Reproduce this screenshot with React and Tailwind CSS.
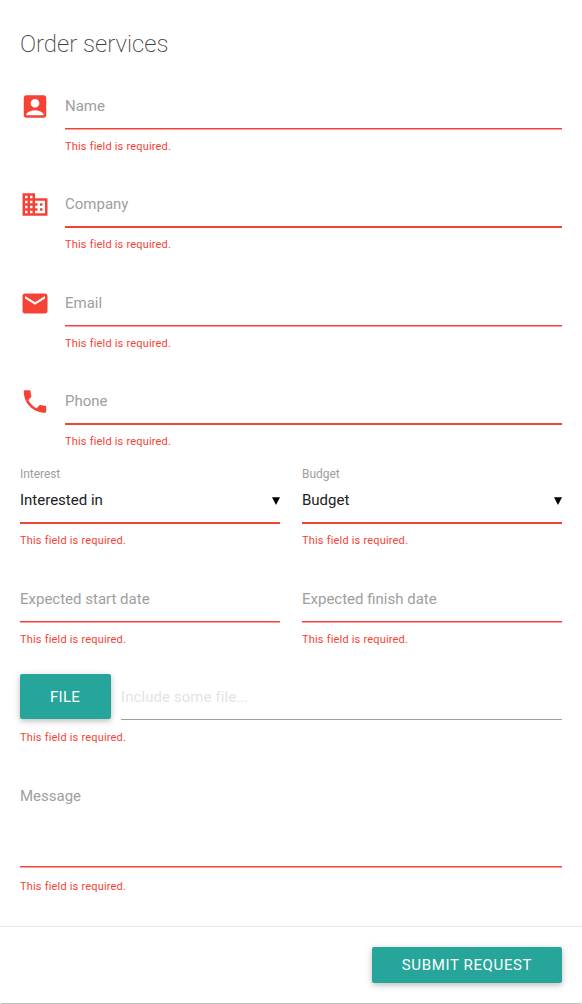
import { MdAccountBox, MdBusiness, MdEmail, MdPhone } from "react-icons/md";

function ErrorText() {
  return <p className="text-[11px] leading-[17px] tracking-[0.19px] text-[#f44336]">This field is required.</p>;
}

const thick = "border-b-2 border-[#f44336]";
const soft = "border-b border-[#f44336] shadow-[0_1px_0_0_#faa19b] mb-px";

function IconField({ icon: Icon, label, line, className }) {
  return (
    <div className={"flex " + className}>
      <Icon className="mt-[12px] size-[30px] shrink-0 translate-y-[0.4px] text-[#f44336]" />
      <div className="ml-[15px] grow">
        <div className={"text-[15px] leading-[54px] text-[#9e9e9e] " + line}>{label}</div>
        <div className="pt-[8px]"><ErrorText /></div>
      </div>
    </div>
  );
}

function SelectField({ label, value }) {
  return (
    <div className="w-[260px]">
      <div className="h-[18px] text-[12px] leading-[18px] tracking-[-0.05px] text-[#9e9e9e]">{label}</div>
      <div className={"flex h-[41px] justify-between text-[15px] leading-[34px] text-[#212121] " + thick}>
        <span>{value}</span>
        <svg viewBox="0 0 8 8" className="mt-[14px] size-[8px]"><path d="M0 .3h8L4 8z" fill="#000" /></svg>
      </div>
      <div className="pt-[8px]"><ErrorText /></div>
    </div>
  );
}

function DateField({ label }) {
  return (
    <div className="w-[260px]">
      <div className={"h-[45px] text-[15px] leading-[45px] text-[#9e9e9e] " + soft}>{label}</div>
      <div className="pt-[8px]"><ErrorText /></div>
    </div>
  );
}

const button = "rounded-[2px] bg-[#26a69a] text-[15px] text-white shadow-[0_2px_5px_0_rgba(0,0,0,0.16),0_2px_10px_0_rgba(0,0,0,0.12)]";

export default function App() {
  return (
    <form className="flex h-[1004px] w-[582px] flex-col rounded-[2px] border-b border-[#bdbdbd] bg-white font-[Roboto,sans-serif]">
      <div className="h-[926px] px-[20px] pt-[28px]">
        <h1 className="h-[51px] text-[24px] leading-[32px] font-extralight tracking-[-0.03px] text-[#424242]">Order services</h1>
        <IconField icon={MdAccountBox} label="Name" line={"h-[50px] " + soft} className="h-[98px]" />
        <IconField icon={MdBusiness} label="Company" line={"h-[51px] " + thick} className="h-[99px]" />
        <IconField icon={MdEmail} label="Email" line={"h-[50px] " + soft} className="h-[98px]" />
        <IconField icon={MdPhone} label="Phone" line={"h-[51px] " + thick} className="h-[91px]" />
        <div className="flex h-[112px] justify-between">
          <SelectField label="Interest" value="Interested in" />
          <SelectField label="Budget" value="Budget" />
        </div>
        <div className="flex h-[97px] justify-between">
          <DateField label="Expected start date" />
          <DateField label="Expected finish date" />
        </div>
        <div className="flex gap-[10px]">
          <button type="button" className={"h-[45px] w-[91px] pt-[1px] pr-[1px] tracking-[0.3px] " + button}>FILE</button>
          <div className="h-[46px] grow border-b border-[#9e9e9e] text-[15px] leading-[46px] tracking-[0.08px] text-[#e4e4e4]">Include some file...</div>
        </div>
        <div className="pt-[9px]"><ErrorText /></div>
        <div className={"mt-[38px] h-[83px] text-[15px] leading-[24px] text-[#9e9e9e] " + soft}>Message</div>
        <div className="pt-[10px]"><ErrorText /></div>
      </div>
      <div className="flex grow justify-end border-t border-[#e8e8e8] px-[20px] pt-[20px]">
        <button type="button" className={"h-[36px] w-[190px] tracking-[0.63px] " + button}>SUBMIT REQUEST</button>
      </div>
    </form>
  );
}
